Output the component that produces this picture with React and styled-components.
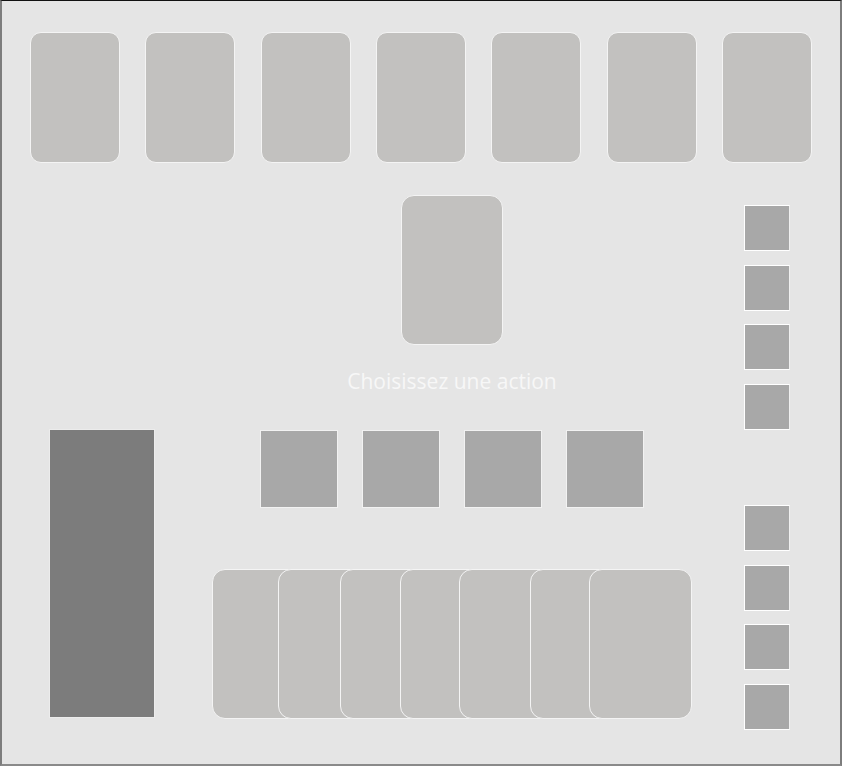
import React from "react";
import styled, { createGlobalStyle } from "styled-components";

const Global = createGlobalStyle`
  html, body { margin: 0; padding: 0; background: #e5e5e5; }
  * { box-sizing: border-box; }
`;

const Board = styled.div`
  width: 842px;
  height: 766px;
  background: #e5e5e5;
  border-top: 1px solid #111111;
  border-left: 2px solid #7d7d7d;
  border-right: 2px solid #7d7d7d;
  border-bottom: 2px solid #8a8a8a;
  display: flex;
  flex-direction: column;
  font-family: "Open Sans", "Liberation Sans", sans-serif;
  overflow: hidden;
`;

const TopRow = styled.div`
  display: flex;
  justify-content: space-between;
  padding: 31px 28px 0 28px;
`;

const Card = styled.div`
  flex: none;
  width: ${(p) => p.$w}px;
  height: ${(p) => p.$h}px;
  margin-left: ${(p) => p.$shift || 0}px;
  background: #c2c1bf;
  border: 1px solid #f4f4f4;
  border-radius: ${(p) => p.$r || 11}px;
`;

const Body = styled.div`
  flex: 1;
  display: flex;
`;

const LeftColumn = styled.div`
  width: 210px;
  padding: 266px 0 0 47px;
`;

const Deck = styled.div`
  width: 106px;
  height: 289px;
  background: #7c7c7c;
  border: 1px solid #ececec;
`;

const CenterColumn = styled.div`
  width: 480px;
  display: flex;
  flex-direction: column;
  align-items: center;
  padding-top: 32px;
`;

const Prompt = styled.div`
  margin-top: 24px;
  font-size: 21px;
  line-height: 24px;
  color: #f7f7f7;
  white-space: nowrap;
`;

const ActionRow = styled.div`
  margin-top: 37px;
  display: flex;
  gap: 24px;
`;

const ActionSquare = styled.div`
  width: 78px;
  height: 78px;
  background: #a8a8a8;
  border: 1px solid #f2f2f2;
`;

const Hand = styled.div`
  margin-top: 61px;
  display: flex;
`;

const RightColumn = styled.div`
  flex: 1;
  padding: 42px 0 0 52px;
  display: flex;
  flex-direction: column;
  gap: 75px;
`;

const TokenGroup = styled.div`
  height: 225px;
  display: flex;
  flex-direction: column;
  justify-content: space-between;
`;

const Token = styled.div`
  width: 46px;
  height: 46px;
  background: #a8a8a8;
  border: 1px solid #ffffff;
  border-right-color: #f0f0f0;
`;

const handCards = [
  { w: 102, s: 0 },
  { w: 102, s: -36 },
  { w: 102, s: -40 },
  { w: 102, s: -42 },
  { w: 102, s: -43 },
  { w: 102, s: -31 },
  { w: 103, s: -43 },
];

export default function App() {
  return (
    <>
      <Global />
      <Board>
        <TopRow>
          {Array.from({ length: 7 }).map((_, i) => (
            <Card key={i} $w={90} $h={131} $r={11} />
          ))}
        </TopRow>
        <Body>
          <LeftColumn>
            <Deck />
          </LeftColumn>
          <CenterColumn>
            <Card $w={102} $h={150} $r={13} />
            <Prompt>Choisissez une action</Prompt>
            <ActionRow>
              {Array.from({ length: 4 }).map((_, i) => (
                <ActionSquare key={i} />
              ))}
            </ActionRow>
            <Hand>
              {handCards.map((c, i) => (
                <Card key={i} $w={c.w} $h={150} $r={13} $shift={c.s} />
              ))}
            </Hand>
          </CenterColumn>
          <RightColumn>
            {[0, 1].map((g) => (
              <TokenGroup key={g}>
                {Array.from({ length: 4 }).map((_, i) => (
                  <Token key={i} />
                ))}
              </TokenGroup>
            ))}
          </RightColumn>
        </Body>
      </Board>
    </>
  );
}
